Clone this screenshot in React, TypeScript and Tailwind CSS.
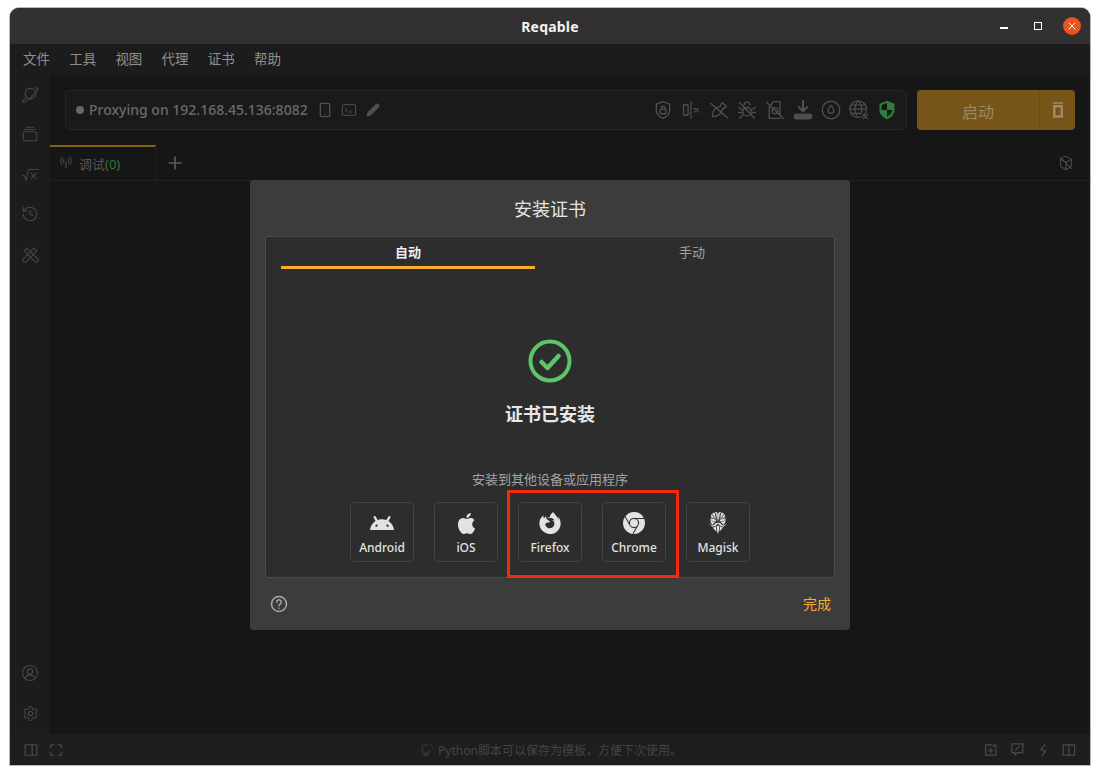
import React from 'react';
import { History, Pencil, Plus, Smartphone, Settings, X } from 'lucide-react';
import { SiAndroid, SiApple, SiFirefoxbrowser, SiGooglechrome, SiMagisk } from 'react-icons/si';

const font = 'font-["Noto_Sans","Noto_Sans_CJK_SC",sans-serif]';

const menus = ['文件', '工具', '视图', '代理', '证书', '帮助'];

function Ico({ size = 18, sw = 1.5, className = '', children }: { size?: number; sw?: number; className?: string; children: React.ReactNode }) {
    return (
        <svg width={size} height={size} viewBox="0 0 24 24" fill="none" stroke="currentColor" strokeWidth={sw} strokeLinecap="round" strokeLinejoin="round" className={className}>
            {children}
        </svg>
    );
}

const sideTop = [
    <Ico key="planet" size={18} sw={1.600}>
        <circle cx="12.500" cy="11.500" r="7" />
        <path d="M7.500 16.500C4 19 1.500 21.500 2.500 22.500c1 1 5-1 9.500-5s9-8.500 10-11c.7-2-.5-3-2.500-2.500" />
    </Ico>,
    <Ico key="cards"><rect x="3" y="9" width="18" height="12" rx="3" /><path d="M5 6h14M7 3h10" /></Ico>,
    <Ico key="sqrt" size={17}><path d="M1 14l2-1 3 7 3-15h14" /><path d="M13 10l7 8M20 10l-7 8" /></Ico>,
    <History key="history" size={18} strokeWidth={1.5} />,
    <Ico key="tools" size={17} sw={1.500}>
        <path d="M3 7l4-4 15 15a2.800 2.800 0 0 1-4 4z" />
        <path d="M21 7l-4-4L2 18a2.800 2.800 0 0 0 4 4z" />
    </Ico>,
];

const toolIcons = [
    <Ico key="a" size={20} sw={1.600}><path d="M12 2l8 3v7c0 5-3 8-8 10-5-2-8-5-8-10V5z" /><rect x="8.500" y="11" width="7" height="5.500" rx="1" /><path d="M10 11V9.500a2 2 0 0 1 4 0V11" /></Ico>,
    <Ico key="b" size={20} sw={1.600}><path d="M12 2v20" strokeDasharray="4 2" /><rect x="3" y="6" width="5.500" height="12" /><path d="M16 10l5 4.500M21 10l-5 4.500" /></Ico>,
    <Ico key="c" size={20} sw={1.600}><path d="M4 20c0-7 3-11 9-12l3-5 5 5-5 3c-1 6-5 9-12 9z" /><path d="M2 4l20 17" /></Ico>,
    <Ico key="d" size={20} sw={1.600}><circle cx="12" cy="14" r="5" /><path d="M8.500 6a3.500 3.500 0 0 1 7 0M2 9l5 3M22 9l-5 3M2 15h4M22 15h-4M3 22l4-4M21 22l-4-4M3 3l18 19" /></Ico>,
    <Ico key="e" size={20} sw={1.600}><path d="M10 2h8v15M19 22H5V9l5-7" /><circle cx="12" cy="13" r="3.500" /><path d="M2 3l20 19" /></Ico>,
    <Ico key="f" size={20} sw={1.600}><path d="M12 1v12M7 8.500l5 5 5-5" strokeWidth={2.500} /><rect x="1.500" y="17" width="21" height="5.500" rx="2.700" fill="currentColor" /></Ico>,
    <Ico key="g" size={20} sw={1.600}><circle cx="12" cy="12" r="10.500" /><path d="M12 6.500c2 2.700 3.500 4.200 3.500 6a3.500 3.500 0 0 1-7 0c0-1.800 1.500-3.300 3.500-6z" /></Ico>,
    <Ico key="h" size={20} sw={1.400}><circle cx="11" cy="11" r="10" /><path d="M1 11h20M3 6h16M3 16h11M11 1c-5 5-5 15 0 20M11 1c5 5 5 11 3 16" /><path d="M17 17l5.500 5.500M22.500 17L17 22.500" /></Ico>,
];

function ShieldIcon() {
    return (
        <svg width="20" height="20" viewBox="0 0 24 24" className="text-[#2e7d3a]">
            <path fill="currentColor" d="M12 1l9 3.500v7c0 5.500-3.500 9.500-9 11.500-5.500-2-9-6-9-11.500v-7z" />
            <path fill="#171717" d="M12 3.500V12H5.500V6zM12 12h6.500c-.5 3.500-3 6.500-6.500 8z" />
        </svg>
    );
}

const platforms = [
    { name: 'Android', icon: <SiAndroid size={24} /> },
    { name: 'iOS', icon: <SiApple size={21} className="my-[1.500px]" /> },
    { name: 'Firefox', icon: <SiFirefoxbrowser size={22} className="my-px" /> },
    { name: 'Chrome', icon: <SiGooglechrome size={22} className="my-px" /> },
    { name: 'Magisk', icon: <SiMagisk size={22} className="my-px" /> },
];

function InstallDialog() {
    return (
        <div className="absolute left-[240px] top-[172px] w-[600px] h-[450px] bg-[#3c3c3c] rounded-[4px] flex flex-col px-[15px]">
            <div className="h-[56px] pt-[2px] flex items-center justify-center text-[18px] text-[#e4e4e4]">安装证书</div>
            <div className="relative h-[342px] bg-[#2d2d2d] border border-[#4a4a4a] rounded-[3px] flex flex-col items-center">
                <div className="w-full flex px-[15px] h-[32px] shrink-0">
                    <div className="w-[254px] border-b-[3px] border-[#f9ab2a] flex items-center justify-center pt-[2px] text-[13px] font-bold text-[#eeeeee]">自动</div>
                    <div className="flex-1 flex items-center justify-center text-[13px] text-[#a0a0a0] pl-[30px]">手动</div>
                </div>
                <svg width="46" height="46" viewBox="0 0 46 46" fill="none" stroke="#5cc469" className="mt-[69px]">
                    <circle cx="23" cy="23" r="19.500" strokeWidth="4" />
                    <path d="M14.500 24l6 6 11-12" strokeWidth="4.500" strokeLinecap="round" strokeLinejoin="round" />
                </svg>
                <div className="mt-[17px] text-[18px] leading-[26px] font-bold text-[#e8e8e8]">证书已安装</div>
                <div className="mt-[42px] text-[13px] leading-[20px] text-[#a3a3a3]">安装到其他设备或应用程序</div>
                <div className="mt-[13px] flex gap-[20px]">
                    {platforms.map((p) => (
                        <div key={p.name} className="w-[64px] h-[60px] border border-[#464646] rounded-[5px] flex flex-col items-center pt-[8px] text-[#e2e2e2]">
                            {p.icon}
                            <span className="text-[12px] leading-[16px] font-medium mt-[5px]">{p.name}</span>
                        </div>
                    ))}
                </div>
                <div className="absolute left-[241px] top-[253px] w-[172px] h-[88px] border-[3px] border-[#f52a0a]" />
            </div>
            <div className="flex-1 flex items-center justify-between pl-[5px] pr-[4px] pb-[1px]">
                <svg width="18" height="18" viewBox="0 0 24 24" fill="none" stroke="#a8a8a8" strokeWidth="2" strokeLinecap="round">
                    <circle cx="12" cy="12" r="10" />
                    <path d="M9 9.500a3 3 0 1 1 4.500 2.600c-1 .6-1.500 1.100-1.500 2.200" />
                    <path d="M12 17.500v.2" />
                </svg>
                <span className="text-[14px] text-[#f5ad33]">完成</span>
            </div>
        </div>
    );
}

export default function App() {
    return (
        <div className={`w-[1100px] h-[775px] bg-white pt-2 pl-2.5 ${font}`}>
            <div className="relative w-[1080px] h-[757px] rounded-t-[9px] overflow-hidden flex flex-col bg-[#161616] shadow-[0_0_0_1px_#b8b8b8]">
                <div className="relative h-[36px] shrink-0 bg-[#323031] flex items-center justify-center">
                    <span className="text-[14px] font-bold text-[#f2f2f2] tracking-[0.2px]">Reqable</span>
                    <div className="absolute right-[9px] top-0 h-full flex items-center text-white">
                        <div className="w-[8px] h-[1.500px] bg-white mt-[4px] mr-[26px]" />
                        <div className="w-[8px] h-[8px] border border-white mr-[21px]" />
                        <div className="w-[18px] h-[18px] rounded-full bg-[#e95420] flex items-center justify-center">
                            <X size={12} strokeWidth={2} />
                        </div>
                    </div>
                </div>

                <div className="h-[31px] shrink-0 bg-[#1c1c1c] flex items-center gap-[19.200px] pl-[13px] text-[13.500px] text-[#8f8f8f]">
                    {menus.map((m) => (
                        <span key={m}>{m}</span>
                    ))}
                </div>

                <div className="flex-1 flex min-h-0">
                    <div className="w-[40px] shrink-0 bg-[#1c1c1c] flex flex-col justify-between pb-[1px] text-[#474747]">
                        <div className="-mt-[1px]">
                            {sideTop.map((icon, i) => (
                                <div key={i} className="h-[40px] flex items-center justify-center">{icon}</div>
                            ))}
                        </div>
                        <div>
                            <div className="h-[40px] flex items-center justify-center">
                                <Ico><circle cx="12" cy="12" r="10" /><circle cx="12" cy="10" r="3.500" /><path d="M5.500 19c1-3 3.500-4 6.500-4s5.500 1 6.500 4" /></Ico>
                            </div>
                            <div className="h-[40px] flex items-center justify-center">
                                <Settings size={17} strokeWidth={1.500} />
                            </div>
                        </div>
                    </div>

                    <div className="flex-1 min-w-0 flex flex-col pt-[15px]">
                        <div className="flex pl-[15px] pr-[15px] h-[40px] shrink-0 gap-[10px]">
                            <div className="flex-1 border border-[#242424] bg-[#1a1a1a] rounded-[4px] flex items-center pl-[10px] pr-[9px] text-[#5f5f5f]">
                                <span className="w-[8px] h-[8px] rounded-full bg-[#666666] mr-[5px]" />
                                <span className="text-[14px] font-medium whitespace-nowrap text-[#6a6a6a] pb-[2px]">Proxying on 192.168.45.136:8082</span>
                                <Smartphone size={16} strokeWidth={2} className="ml-[9px] text-[#505050]" />
                                <svg width="16" height="16" viewBox="0 0 24 24" fill="none" stroke="#505050" strokeWidth="1.500" className="ml-[8px]">
                                    <rect x="2" y="4" width="20" height="16" rx="2" />
                                    <path d="M6 9l3 2.500L6 14M11 15h6" />
                                </svg>
                                <Pencil size={14} strokeWidth={2} fill="#505050" className="ml-[9px] text-[#505050]" />
                                <div className="ml-auto flex items-center gap-[8px] text-[#4f4f4f]">
                                    {toolIcons}
                                    <ShieldIcon />
                                </div>
                            </div>
                            <div className="w-[158px] bg-[#775418] rounded-[4px] flex text-[#9a8a68]">
                                <div className="flex-1 flex items-center justify-center text-[16px] pt-[3px]">启动</div>
                                <div className="w-[36px] border-l border-[#6d4d16] flex items-center justify-center">
                                    <svg width="16" height="18" viewBox="0 0 16 18" fill="none" stroke="currentColor">
                                        <path d="M3 2h10" strokeWidth="1.500" />
                                        <path d="M4.250 5.250h7.500V15.500h-7.500z" strokeWidth="2.500" />
                                    </svg>
                                </div>
                            </div>
                        </div>

                        <div className="mt-[15px] h-[36px] shrink-0 flex border-b border-[#212121]">
                            <div className="w-[106px] border-t-2 border-r border-t-[#8a5e16] border-r-[#212121] flex items-center pl-[9px]">
                                <svg width="14" height="14" viewBox="0 0 24 24" fill="none" stroke="#555555" strokeWidth="1.500" strokeLinecap="round" className="mb-[3px]">
                                    <path d="M12 11v11M5 3C2.500 7 2.500 13 5 17M19 3c2.500 4 2.500 10 0 14M8.500 6c-1.500 2.500-1.500 5.500 0 8M15.500 6c1.500 2.500 1.500 5.500 0 8" />
                                </svg>
                                <span className="ml-[6px] pt-[2px] text-[13px] text-[#555555]">调试<span className="text-[#2d7a38]">(0)</span></span>
                            </div>
                            <Plus size={20} strokeWidth={2} className="ml-[9px] mt-[8px] text-[#5c5c5c]" />
                            <div className="ml-auto mr-[16px] flex items-center text-[#505050]">
                                <Ico size={16}><path d="M12 2l8 4.500v11L12 22l-8-4.500v-11z" /><path d="M4 6.500l8 4.500 8-4.500M12 11v11M3 3l18 18" /></Ico>
                            </div>
                        </div>
                        <div className="flex-1" />
                    </div>
                </div>

                <div className="h-[31px] shrink-0 bg-[#1e1e1e] flex items-center px-[14px] text-[#4b4b4b]">
                    <div className="w-[92px] flex items-center">
                        <Ico size={14} sw={2}><rect x="2" y="3" width="20" height="18" /><path d="M14 3v18" /></Ico>
                        <Ico size={14} sw={2} className="ml-[11px]"><path d="M3 8V3h5M16 3h5v5M21 16v5h-5M8 21H3v-5" /></Ico>
                    </div>
                    <div className="flex-1 flex items-center justify-center text-[12px] text-[#444444] pt-[2px]">
                        <Ico size={16} className="mr-[4px] mb-[2px]"><path d="M9 17c0-2-3-3-3-7a6 6 0 0 1 9-5" /><path d="M15 17c0-1.500 1.500-2.500 2.300-4M9 20h6M19 4l1-1M21 8h1" /><path d="M9 17h6" /></Ico>
                        Python脚本可以保存为模板，方便下次使用。
                    </div>
                    <div className="w-[92px] flex items-center justify-end gap-[12px]">
                        <Ico size={14} sw={2}><path d="M14 3H3v18h18V11" /><path d="M12 9v8M8 13h8M19 2v6M16 5h6" /></Ico>
                        <Ico size={15} sw={2}><path d="M3 3h18v14h-9l-4 4v-4H3z" /><path d="M9 13l6-6" /></Ico>
                        <Ico size={14} sw={2}><path d="M14 2L7 11l8 3-6 8" /></Ico>
                        <Ico size={14} sw={2}><rect x="2" y="3" width="20" height="18" /><path d="M12 3v18" /></Ico>
                    </div>
                </div>

                <InstallDialog />
            </div>
        </div>
    );
}
